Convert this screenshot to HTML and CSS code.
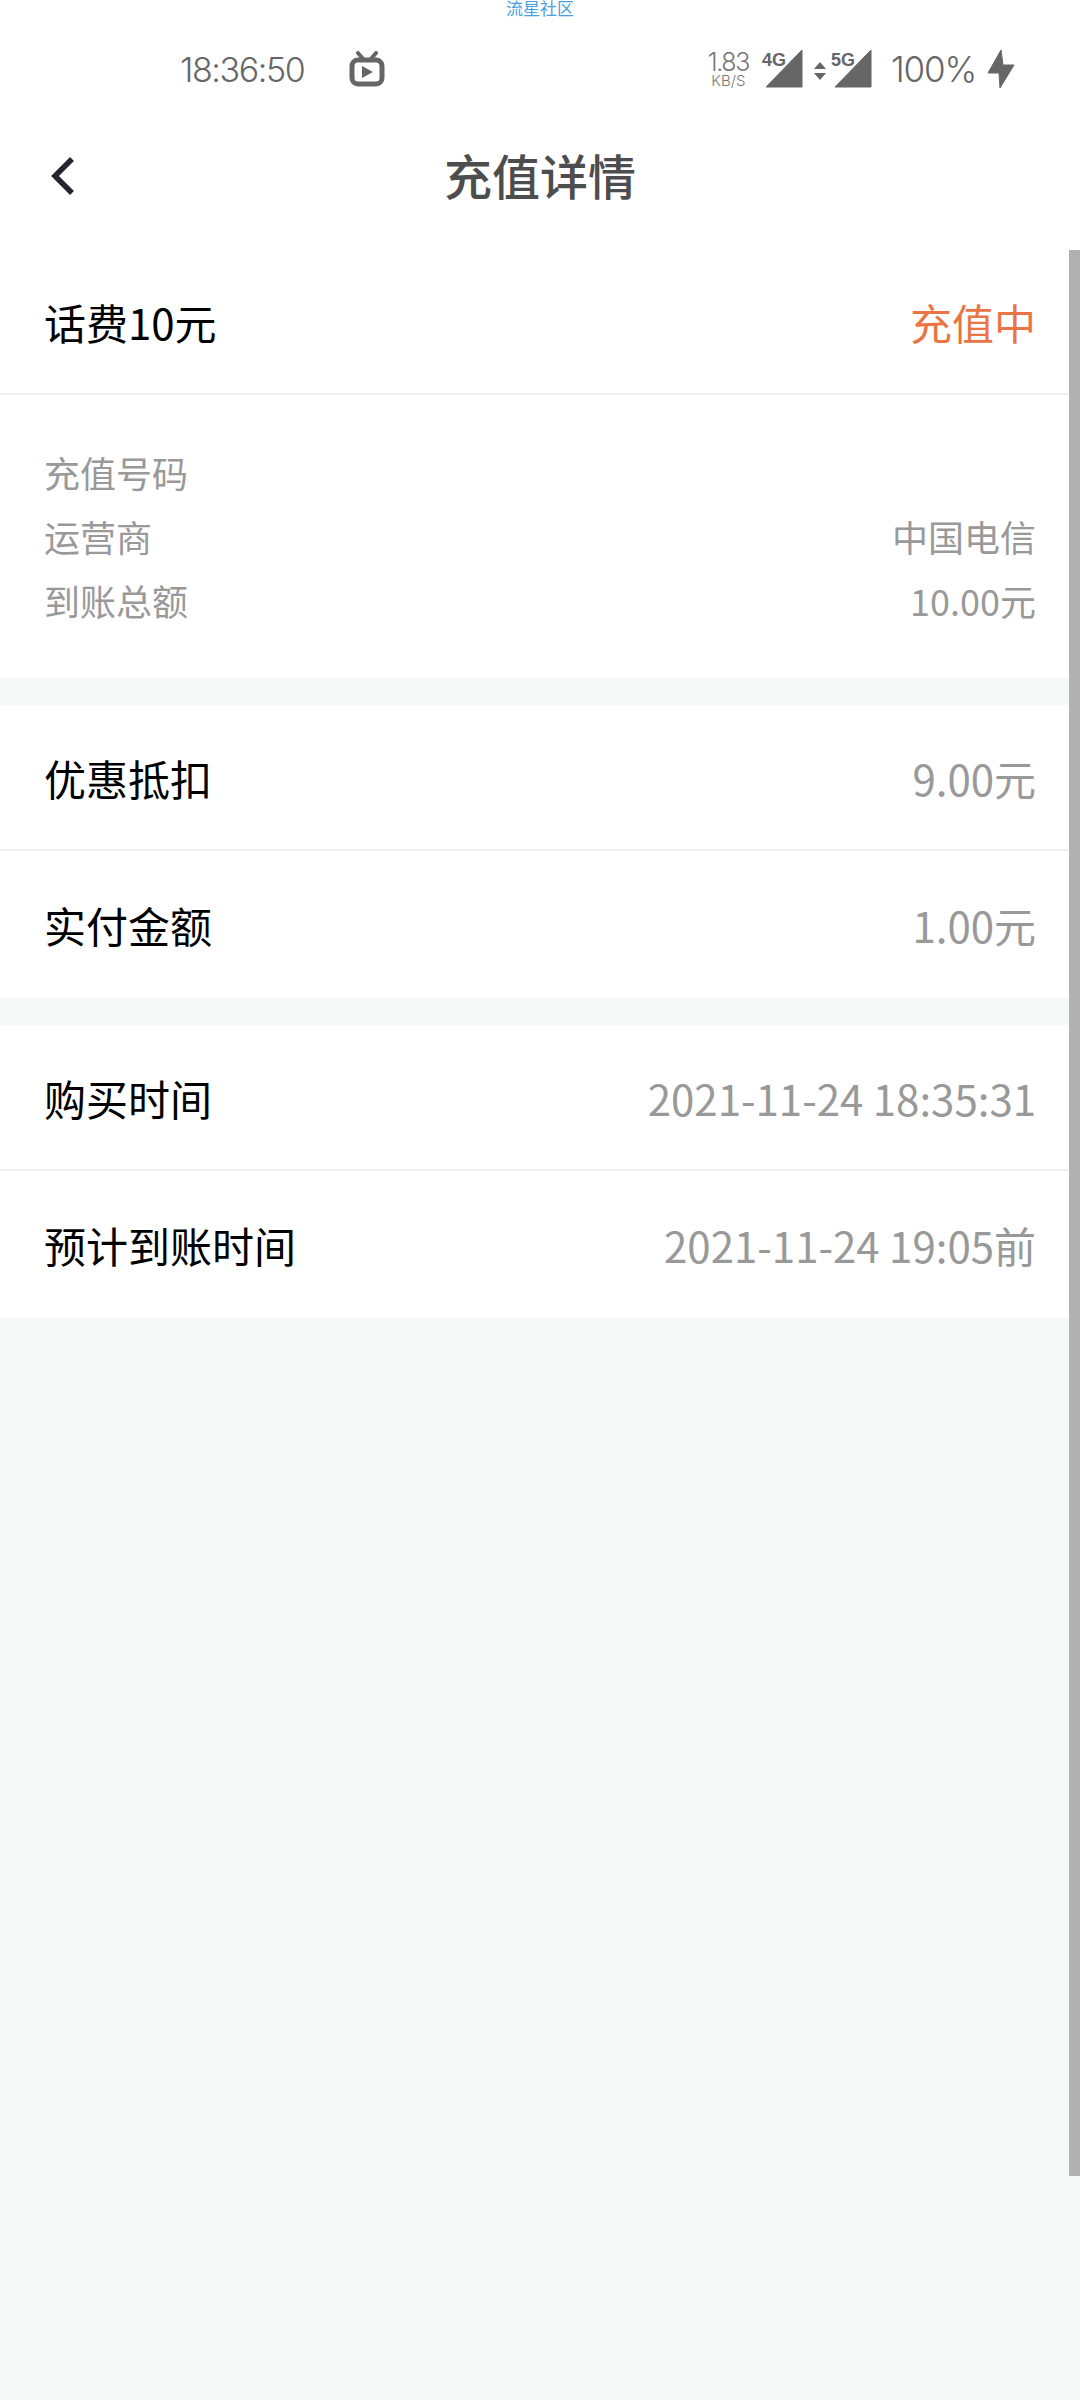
FILE: index.html
```html
<!DOCTYPE html>
<html lang="zh-CN">
<head>
  <meta charset="UTF-8" />
  <meta name="viewport" content="width=device-width, initial-scale=1.0" />
  <title>充值详情</title>
  <link rel="stylesheet" href="styles.css">
</head>
<body>
  <div class="watermark">流星社区</div>

  <div class="status-bar">
    <div class="status-left">
      <span class="clock">18:36:50</span>
      <svg class="tv-icon" width="36" height="36" viewBox="0 0 36 36">
        <path d="M9 2 L15 9 M27 2 L21 9" stroke="#666" stroke-width="4" stroke-linecap="round" fill="none" />
        <rect x="3" y="9" width="30" height="24" rx="6" fill="none" stroke="#666" stroke-width="5" />
        <path d="M13 15 L24 21 L13 27 Z" fill="#666" />
      </svg>
    </div>
    <div class="status-right">
      <div class="net-speed">
        <span class="speed-num">1.83</span>
        <span class="speed-unit">KB/S</span>
      </div>
      <svg class="signal" width="40" height="40" viewBox="0 0 40 40">
        <path d="M2 38 L38 1 L38 38 Z" fill="#666" stroke="#666" stroke-linejoin="round" />
        <text x="-2" y="17" class="signal-label">4G</text>
      </svg>
      <svg class="updown" width="14" height="20" viewBox="0 0 14 20">
        <path d="M7 1 L13 8 L1 8 Z M7 19 L13 12 L1 12 Z" fill="#666" />
      </svg>
      <svg class="signal signal-5g" width="40" height="40" viewBox="0 0 40 40">
        <path d="M2 38 L38 1 L38 38 Z" fill="#666" stroke="#666" stroke-linejoin="round" />
        <text x="-2" y="17" class="signal-label">5G</text>
      </svg>
      <span class="battery">100%</span>
      <svg class="bolt" width="28" height="38" viewBox="0 0 28 38">
        <path d="M14 0 L16 15 L27 15 L13 38 L12 23 L1 23 Z" fill="#666" stroke="#666" stroke-linejoin="round" />
      </svg>
    </div>
  </div>

  <header class="title-bar">
    <svg class="back" width="26" height="42" viewBox="0 0 26 42">
      <path d="M22 4 L5 21 L22 38" fill="none" stroke="#24262e" stroke-width="5.5" />
    </svg>
    <h1>充值详情</h1>
  </header>

  <section class="card">
    <div class="row">
      <span class="label">话费10元</span>
      <span class="status">充值中</span>
    </div>
    <div class="info">
      <div class="info-row"><span>充值号码</span></div>
      <div class="info-row"><span>运营商</span><span>中国电信</span></div>
      <div class="info-row"><span>到账总额</span><span>10.00元</span></div>
    </div>
  </section>

  <section class="card">
    <div class="row">
      <span class="label">优惠抵扣</span>
      <span class="value">9.00元</span>
    </div>
    <div class="row">
      <span class="label">实付金额</span>
      <span class="value">1.00元</span>
    </div>
  </section>

  <section class="card">
    <div class="row">
      <span class="label">购买时间</span>
      <span class="value">2021-11-24 18:35:31</span>
    </div>
    <div class="row">
      <span class="label">预计到账时间</span>
      <span class="value">2021-11-24 19:05前</span>
    </div>
  </section>

  <div class="scroll-thumb"></div>
</body>
</html>
```

FILE: styles.css
```css
html, body {
  height: 100%;
}
body {
  margin: 0;
  background: #f7f9f8;
  font-family: "Noto Sans CJK SC", "Noto Sans", sans-serif;
  color: #000;
  overflow: hidden;
}
.watermark {
  position: absolute;
  top: 0;
  left: 0;
  right: 0;
  text-align: center;
  font-size: 17px;
  line-height: 16px;
  color: #4a9fe0;
}
.status-bar {
  display: flex;
  justify-content: space-between;
  align-items: center;
  height: 138px;
  margin-bottom: -23px;
  box-sizing: border-box;
  padding: 0 65px 0 180px;
  background: #fff;
  color: #666;
  font-family: Inter, "Liberation Sans", sans-serif;
  font-weight: 300;
}
.status-left, .status-right {
  display: flex;
  align-items: center;
}
.clock {
  font-size: 34px;
  letter-spacing: -1.4px;
}
.tv-icon {
  margin-left: 45px;
}
.net-speed {
  display: flex;
  flex-direction: column;
  align-items: center;
  margin-right: 15px;
  color: #777;
}
.speed-num {
  font-size: 25px;
  line-height: 24px;
  letter-spacing: -1.4px;
}
.speed-unit {
  font-size: 15px;
  line-height: 14px;
}
.signal {
  overflow: visible;
}
.signal-label {
  font-family: "Liberation Sans", sans-serif;
  font-size: 18px;
  font-weight: bold;
  fill: #666;
}
.updown {
  margin: 4px 0 0 9px;
}
.signal-5g {
  margin-left: 6px;
}
.battery {
  margin-left: 18px;
  font-size: 35px;
  letter-spacing: -1.2px;
}
.bolt {
  margin-left: 11px;
}
.title-bar {
  position: relative;
  display: flex;
  justify-content: center;
  height: 134px;
  background: #fff;
}
.title-bar h1 {
  margin: 0;
  font-size: 48px;
  line-height: 118px;
  font-weight: 500;
  color: #4d4d4d;
}
.back {
  position: absolute;
  left: 50px;
  top: 40px;
}
.card {
  background: #fff;
  margin-bottom: 27px;
}
.row {
  display: flex;
  justify-content: space-between;
  align-items: center;
  height: 149px;
  box-sizing: border-box;
  padding: 0 44px;
  border-top: 2px solid #f0f0f0;
  font-size: 42px;
}
.row:first-child {
  border-top: none;
  height: 144px;
}
.value {
  color: #999;
}
.status {
  color: #ea7444;
}
.info {
  border-top: 2px solid #f0f0f0;
  padding: 45px 44px 46px;
  color: #999;
  font-size: 36px;
}
.info-row {
  display: flex;
  justify-content: space-between;
  height: 64px;
  line-height: 64px;
}
.scroll-thumb {
  position: absolute;
  top: 250px;
  right: 0;
  width: 11px;
  height: 1926px;
  background: #b0b1b0;
}
```
